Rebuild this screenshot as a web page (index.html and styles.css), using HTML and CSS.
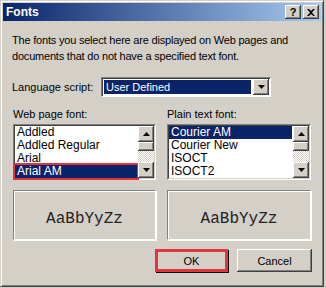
FILE: index.html
```html
<!DOCTYPE html>
<html lang="en">

<head>
    <meta charset="UTF-8">
    <title>Fonts</title>
    <link rel="stylesheet" href="styles.css">
</head>

<body>
    <div class="dialog">
        <div class="titlebar">
            <span class="title">Fonts</span>
            <div class="caption-buttons">
                <span class="cap-btn help">?</span>
                <span class="cap-btn close">
                    <svg width="8" height="7" viewBox="0 0 8 7">
                        <path d="M0 0h2l2 2 2-2h2L5 3.5 8 7H6L4 5 2 7H0l3-3.5z" fill="#000" />
                    </svg>
                </span>
            </div>
        </div>

        <div class="content">
            <p class="intro">The fonts you select here are displayed on Web pages and<br>documents that do not have a specified text font.</p>

            <div class="lang-row">
                <span class="lang-label">Language script:</span>
                <div class="combo">
                    <div class="combo-field"><span class="combo-value">User Defined</span></div>
                    <span class="sb-btn">
                        <svg width="7" height="4" viewBox="0 0 7 4"><path d="M0 0h7L3.5 4z" fill="#000" /></svg>
                    </span>
                </div>
            </div>

            <div class="font-cols">
                <div class="font-col">
                    <div class="col-label">Web page font:</div>
                    <div class="listbox">
                        <div class="listbox-inner">
                            <ul class="items">
                                <li>Addled</li>
                                <li>Addled Regular</li>
                                <li>Arial</li>
                                <li class="selected marked">Arial AM</li>
                            </ul>
                            <div class="scrollbar">
                                <span class="sb-btn">
                                    <svg width="7" height="4" viewBox="0 0 7 4"><path d="M0 4h7L3.5 0z" fill="#000" /></svg>
                                </span>
                                <span class="sb-thumb"></span>
                                <span class="sb-track"></span>
                                <span class="sb-btn">
                                    <svg width="7" height="4" viewBox="0 0 7 4"><path d="M0 0h7L3.5 4z" fill="#000" /></svg>
                                </span>
                            </div>
                        </div>
                    </div>
                    <div class="preview">AaBbYyZz</div>
                </div>

                <div class="font-col">
                    <div class="col-label">Plain text font:</div>
                    <div class="listbox">
                        <div class="listbox-inner">
                            <ul class="items">
                                <li class="selected">Courier AM</li>
                                <li>Courier New</li>
                                <li>ISOCT</li>
                                <li>ISOCT2</li>
                            </ul>
                            <div class="scrollbar">
                                <span class="sb-btn">
                                    <svg width="7" height="4" viewBox="0 0 7 4"><path d="M0 4h7L3.5 0z" fill="#000" /></svg>
                                </span>
                                <span class="sb-thumb"></span>
                                <span class="sb-track"></span>
                                <span class="sb-btn">
                                    <svg width="7" height="4" viewBox="0 0 7 4"><path d="M0 0h7L3.5 4z" fill="#000" /></svg>
                                </span>
                            </div>
                        </div>
                    </div>
                    <div class="preview">AaBbYyZz</div>
                </div>
            </div>

            <div class="actions">
                <button class="btn default">OK</button>
                <button class="btn cancel">Cancel</button>
            </div>
        </div>
    </div>
</body>

</html>
```

FILE: styles.css
```css
html,
body {
    margin: 0;
    padding: 0;
    background: #d4d0c8;
}

body {
    font-family: "Liberation Sans", Arial, sans-serif;
    font-size: 11px;
    color: #000;
}

.dialog {
    box-sizing: border-box;
    width: 324px;
    height: 287px;
    padding: 1px;
    border: 1px solid;
    border-color: #d4d0c8 #404040 #404040 #d4d0c8;
    box-shadow: inset 1px 1px #fff, inset -1px -1px #808080;
    display: flex;
    flex-direction: column;
}

.titlebar {
    margin: 1px 1px 0;
    height: 18px;
    display: flex;
    align-items: center;
    justify-content: space-between;
    background: linear-gradient(90deg, #0a246a, #a6caf0);
    color: #fff;
}

.title {
    padding-left: 3px;
    font-weight: bold;
    font-size: 12px;
}

.caption-buttons {
    display: flex;
    gap: 2px;
    padding-right: 2px;
}

.cap-btn {
    width: 16px;
    height: 14px;
    display: flex;
    align-items: center;
    justify-content: center;
    background: #d4d0c8;
    color: #000;
    font-weight: bold;
    font-size: 11px;
    box-shadow: inset -1px -1px #404040, inset 1px 1px #fff, inset -2px -2px #808080;
}

.content {
    padding: 11px 10px 0 10px;
}

.intro {
    margin: 0;
    line-height: 16px;
    letter-spacing: -0.2px;
}

.lang-row {
    display: flex;
    align-items: center;
    margin-top: 13px;
}

.lang-label {
    width: 89px;
}

.combo {
    box-sizing: border-box;
    width: 170px;
    height: 20px;
    display: flex;
    padding: 1px;
    border: 1px solid;
    border-color: #808080 #fff #fff #808080;
    background: #fff;
    box-shadow: inset 1px 1px #404040;
}

.combo-field {
    flex: 1;
    padding: 1px 2px 1px 1px;
    background: #fff;
    display: flex;
}

.combo-value {
    flex: 1;
    background: #0a246a;
    color: #fff;
    line-height: 14px;
    padding-left: 2px;
}

.combo .sb-btn {
    height: auto;
}

.font-cols {
    display: flex;
    gap: 11px;
    margin-top: 9px;
    padding-left: 1px;
}

.font-col {
    width: 143px;
    display: flex;
    flex-direction: column;
}

.font-col+.font-col {
    width: 144px;
}

.col-label {
    line-height: 16px;
}

.listbox {
    margin-top: 2px;
    height: 56px;
    box-sizing: border-box;
    border: 1px solid;
    border-color: #808080 #fff #fff #808080;
}

.listbox-inner {
    height: 100%;
    box-sizing: border-box;
    border: 1px solid;
    border-color: #404040 #d4d0c8 #d4d0c8 #404040;
    background: #fff;
    display: flex;
}

.items {
    flex: 1;
    list-style: none;
    margin: 0;
    padding: 0 1px 0 0;
    font-size: 12px;
}

.items li {
    height: 13px;
    line-height: 13px;
    padding-left: 2px;
    white-space: nowrap;
}

.items li.selected {
    background: #0a246a;
    color: #fff;
}

.items li.marked {
    outline: 2px solid #e2343c;
    outline-offset: 0;
}

.scrollbar {
    width: 16px;
    display: flex;
    flex-direction: column;
}

.sb-btn {
    width: 16px;
    height: 16px;
    flex: none;
    display: flex;
    align-items: center;
    justify-content: center;
    background: #d4d0c8;
    box-shadow: inset -1px -1px #404040, inset 1px 1px #fff, inset -2px -2px #808080;
}

.sb-thumb {
    height: 9px;
    background: #d4d0c8;
    box-shadow: inset -1px -1px #404040, inset 1px 1px #fff, inset -2px -2px #808080;
}

.sb-track {
    flex: 1;
    background-image: repeating-conic-gradient(#fff 0 25%, #d4d0c8 0 50%);
    background-size: 2px 2px;
}

.preview {
    margin-top: 10px;
    height: 50px;
    box-sizing: border-box;
    border: 1px solid;
    border-color: #808080 #fff #fff #808080;
    box-shadow: inset 1px 1px #fff, 1px 1px #fff;
    display: flex;
    align-items: center;
    justify-content: center;
    padding-top: 8px;
    font-family: "Liberation Mono", "Courier New", monospace;
    font-size: 16px;
    color: #222;
}

.actions {
    display: flex;
    justify-content: flex-end;
    gap: 9px;
    margin-top: 9px;
}

.btn {
    height: 23px;
    padding: 0;
    border: none;
    font-family: "Liberation Sans", Arial, sans-serif;
    font-size: 11px;
    color: #000;
    background: #d4d0c8;
    box-shadow: inset -1px -1px #404040, inset 1px 1px #fff, inset -2px -2px #808080;
}

.btn.default {
    width: 73px;
    border: 3px solid #e2343c;
    box-shadow: 1px 1px #000;
}

.btn.cancel {
    width: 75px;
}
```
